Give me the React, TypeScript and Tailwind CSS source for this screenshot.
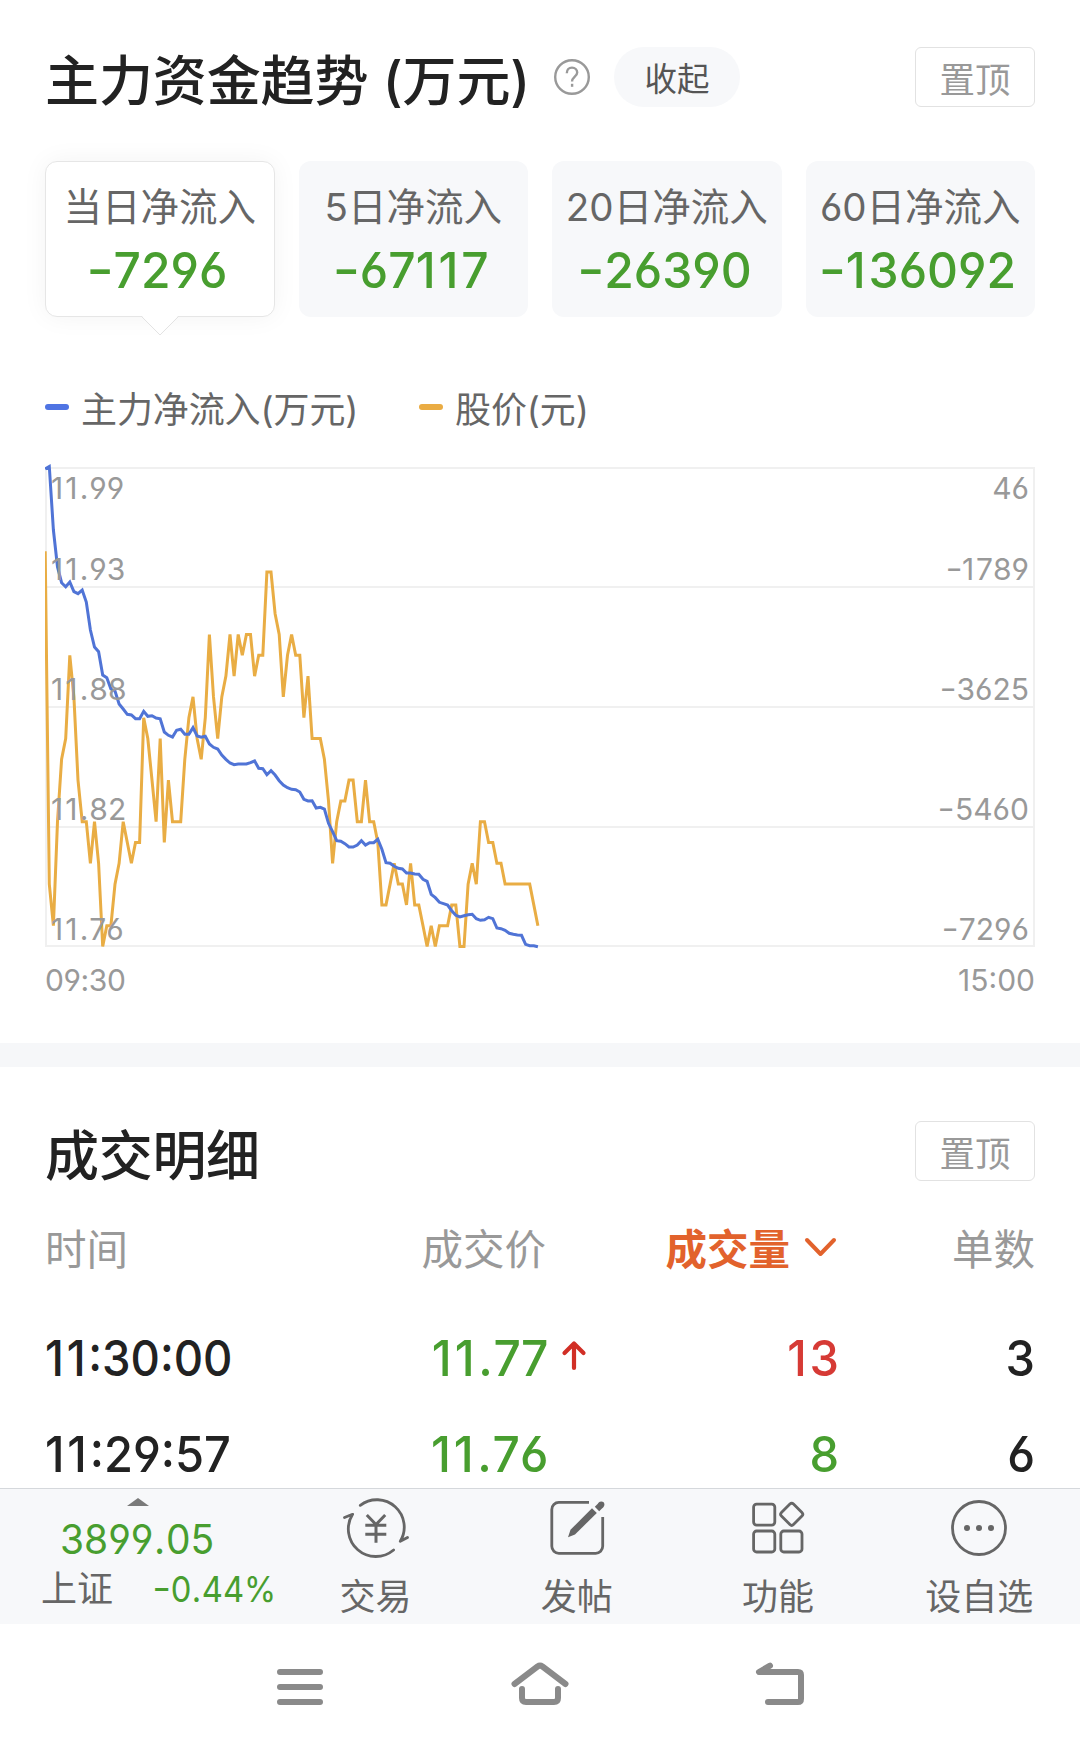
import React from "react";

const INFLOW_Y = [
  469, 466.5, 530, 567, 582.7, 586.7, 582, 591.7, 593.7, 590, 602, 630, 647, 651.7, 675, 677.7, 689, 691, 704, 709,
  714.3, 715, 718.7, 718.7, 711.3, 716.3, 715.7, 718, 718.7, 732, 735.3, 737, 730.3, 729.3, 734.3, 734.3, 727.7, 736,
  737.3, 736.3, 744, 747.3, 749, 755, 759.3, 763, 764.7, 764, 764, 764, 762.7, 761, 768.3, 768.7, 774.7, 770.7, 775,
  780.7, 785, 787.7, 789.3, 789.7, 792, 799.3, 801, 800.7, 808, 807.3, 809, 823.3, 831.7, 840.7, 841.3, 843.7, 847,
  847, 845, 840.7, 845, 842.7, 842.7, 839.3, 849.3, 862.7, 863.3, 866.3, 868.3, 869, 873, 873, 874, 874.3, 879.3,
  881.3, 894.3, 897.7, 902.3, 903.7, 905, 910.7, 915.3, 917, 915.7, 914.7, 914.3, 918.7, 920.3, 919.7, 917.3, 918.7,
  928, 928.7, 930.3, 933.3, 934.3, 935, 935.3, 944.3, 945.7, 945.7, 946.7,
];

// Price per minute, in cents above 11.76
const PRICE = [
  19, 3, 1, 6, 9, 10, 14, 12, 8, 6, 6, 4, 6, 4, 0, 1, 1, 3, 4, 6, 5, 4, 5, 5, 11, 10, 8, 6, 10, 5, 8, 6, 6, 6, 9, 11,
  12, 10, 9, 11, 15, 12, 10, 12, 13, 15, 13, 15, 14, 15, 15, 13, 14, 14, 18, 18, 16, 15, 12, 14, 15, 14, 14, 11, 13,
  10, 10, 10, 9, 7, 4, 6, 7, 7, 8, 8, 6, 6, 8, 6, 6, 5, 2, 2, 3, 4, 3, 3, 2, 4, 2, 2, 1, 0, 1, 0, 1, 1, 1, 2, 2, 0,
  0, 3, 4, 3, 6, 6, 5, 5, 4, 4, 3, 3, 3, 3, 3, 3, 3, 2, 1,
];

const px = (i: number) => (i * 4.106 + 0.2).toFixed(1);
const inflowPoints = INFLOW_Y.map((y, i) => `${px(i)},${y - 460}`).join(" ");
const pricePoints = PRICE.map((n, i) => `${px(i)},${(486.5 - n * 20.8).toFixed(1)}`).join(" ");

const CARDS = [
  { label: "当日净流入", value: "-7296", active: true },
  { label: "5日净流入", value: "-67117" },
  { label: "20日净流入", value: "-26390" },
  { label: "60日净流入", value: "-136092" },
];

const AXIS = [
  { left: "11.99", right: "46", top: "top-[13px]" },
  { left: "11.93", right: "-1789", top: "top-[94px]" },
  { left: "11.88", right: "-3625", top: "top-[214px]" },
  { left: "11.82", right: "-5460", top: "top-[334px]" },
  { left: "11.76", right: "-7296", top: "top-[454px]" },
];

// Figures with a wider minus, point and digit one than the font gives
function Num({ value }: { value: string }) {
  return (
    <>
      {value.split(/([-.1])/).map((part, i) => {
        if (part === "-") return <span key={i} className="-mr-[0.01em] inline-block origin-right -translate-y-[0.03em] scale-x-[1.25]">-</span>;
        if (part === ".") return <span key={i} className="mx-[0.015em]">.</span>;
        if (part === "1") return <span key={i} className="mr-[0.06em]">1</span>;
        return part;
      })}
    </>
  );
}

function PinButton() {
  return (
    <button className="flex h-[60px] w-[120px] items-center justify-center rounded-[6px] border border-[#e2e2e2] pt-[7px] text-[35.5px] leading-none text-[#999]">
      置顶
    </button>
  );
}

function Tab({ label, children }: { label: string; children: React.ReactNode }) {
  return (
    <div className="flex flex-1 flex-col items-center pt-[6px]">
      <svg width="68" height="66" viewBox="0 0 68 66" fill="none" stroke="#666" strokeWidth="2.8">
        {children}
      </svg>
      <span className="mt-[18px] text-[36px] leading-[36px] text-[#666]">{label}</span>
    </div>
  );
}

export default function App() {
  return (
    <div className="flex h-[1748px] w-[1080px] flex-col overflow-hidden bg-white font-['Inter','Noto_Sans_CJK_SC',sans-serif] text-[#222] [font-feature-settings:'cv03','cv04'] [font-kerning:none]">
      <section className="flex h-[1043px] flex-col px-[45px] pt-[47px]">
        <header className="flex h-[60px] items-center">
          <h1 className="w-[509px] pt-[9px] text-[54px] leading-none font-medium tracking-[-0.1px] whitespace-nowrap">主力资金趋势 (万元)</h1>
          <svg width="38" height="38" viewBox="0 0 38 38" fill="none" stroke="#999" strokeWidth="2.4">
            <circle cx="18" cy="19" r="16.8" />
            <path d="M12.800 15.200c0-3.400 2.200-5.600 5.200-5.600s5.200 2.100 5.200 5c0 4-5.100 4.300-5.100 8.900" />
            <path d="M18.100 25.800v3" />
          </svg>
          <button className="ml-[22px] h-[60px] w-[126px] rounded-full bg-[#f7f8fa] pt-[7px] text-[32.5px] leading-none text-[#555]">收起</button>
          <div className="ml-auto">
            <PinButton />
          </div>
        </header>

        <div className="mt-[54px] grid grid-cols-4 gap-[24px]">
          {CARDS.map((c) => (
            <div
              key={c.label}
              className={
                c.active
                  ? "relative flex h-[156px] flex-col items-center rounded-[12px] border border-[#e6e6e6] bg-white pt-[26px] shadow-[0_0_26px_rgba(0,0,0,0.05)]"
                  : "flex h-[156px] flex-col items-center rounded-[12px] bg-[#f7f8fa] pt-[27px]"
              }
            >
              <span className="text-[38.5px] leading-[38px] whitespace-nowrap text-[#666]">{c.label}</span>
              <span className="mt-[19px] scale-x-[0.96] text-[50px] leading-[50px] font-medium whitespace-nowrap text-[#489e2f]">
                <Num value={c.value} />
              </span>
              {c.active && (
                <svg className="absolute top-[153px] left-[94px]" width="40" height="22" viewBox="0 0 40 22">
                  <path d="M1 0 L20 20 L39 0Z" fill="#fff" />
                  <path d="M1.500 1.500 L20 20 L38.500 1.500" fill="none" stroke="#e3e3e3" />
                </svg>
              )}
            </div>
          ))}
        </div>

        <div className="mt-[71px] flex h-[38px] items-center text-[36px] leading-none text-[#666]">
          <i className="h-[6px] w-[24px] rounded-full bg-[#4f74e3]" />
          <span className="ml-[12px] w-[338px] pt-[6px] tracking-[-0.1px] whitespace-nowrap">主力净流入(万元)</span>
          <i className="h-[6px] w-[24px] rounded-full bg-[#eaac43]" />
          <span className="ml-[12px] pt-[6px] tracking-[-0.1px]">股价(元)</span>
        </div>

        <div className="relative mt-[34px] h-[494px]">
          <svg width="990" height="494" viewBox="0 0 990 494" fill="none" strokeWidth="3">
            <g stroke="#f0f0f0" strokeWidth="2">
              <path d="M0 8H990M0 127H990M0 247H990M0 367H990M0 486H990M1 8V486M989 8V486" />
            </g>
            <polyline points={pricePoints} stroke="#e9ad44" />
            <polyline points={inflowPoints} stroke="#5074d6" />
          </svg>
          {AXIS.map((a) => (
            <div key={a.left} className={`absolute inset-x-0 flex justify-between pr-[6px] pl-[6px] text-[30px] leading-[30px] text-[#999] ${a.top}`}>
              <span className="tracking-[0.2px]"><Num value={a.left} /></span>
              <span><Num value={a.right} /></span>
            </div>
          ))}
        </div>
        <div className="mt-[11px] flex justify-between text-[30px] leading-[30px] text-[#999]">
          <span className="tracking-[-0.4px]">09:30</span>
          <span>15:00</span>
        </div>
      </section>

      <div className="h-[24px] bg-[#f6f7f9]" />

      <section className="flex h-[421px] flex-col overflow-hidden px-[45px] pt-[54px]">
        <header className="flex h-[60px] items-center justify-between">
          <h2 className="pt-[11px] text-[54px] leading-none font-medium tracking-[-0.3px]">成交明细</h2>
          <PinButton />
        </header>
        <div className="mt-[48px] grid grid-cols-[501px_291px_198px] text-[41.500px] leading-[42px] text-[#999]">
          <div className="flex justify-between">
            <span>时间</span>
            <span>成交价</span>
          </div>
          <div className="flex items-center justify-end">
            <span className="font-bold text-[#e2622c]">成交量</span>
            <svg className="mb-[4px] ml-[14px]" width="33" height="22" viewBox="0 0 33 22" fill="none" stroke="#e2622c" strokeWidth="4" strokeLinecap="round" strokeLinejoin="round">
              <path d="M3 3 L16.500 17 L30 3" />
            </svg>
          </div>
          <span className="text-right">单数</span>
        </div>
        <div className="mt-[39px]">
          {[
            { t: "11:30:00", p: "11.77", up: true, v: "13", n: "3" },
            { t: "11:29:57", p: "11.76", up: false, v: "8", n: "6" },
          ].map((r) => (
            <div key={r.t} className="grid h-[96px] grid-cols-[501px_291px_198px] items-center text-[50px] leading-none font-medium">
              <div className="flex justify-between">
                <span className={`origin-left ${r.up ? "scale-x-[0.91]" : "scale-x-[0.94]"}`}><Num value={r.t} /></span>
                <span className="relative">
                  <span className="inline-block origin-right translate-x-[2px] scale-x-[0.96] text-[#489e2f]"><Num value={r.p} /></span>
                  {r.up && (
                    <svg className="absolute top-[7px] left-full ml-[15px]" width="26" height="32" viewBox="0 0 26 32" fill="none" stroke="#d12f26" strokeWidth="4.200" strokeLinecap="round" strokeLinejoin="round">
                      <path d="M13 28V4M3.500 13 L13 3.500 L22.500 13" />
                    </svg>
                  )}
                </span>
              </div>
              <span className={`origin-right translate-x-[2px] scale-x-[0.94] text-right ${r.up ? "text-[#d63a35]" : "text-[#489e2f]"}`}>
                <Num value={r.v} />
              </span>
              <span className="origin-right scale-x-[0.94] text-right">{r.n}</span>
            </div>
          ))}
        </div>
      </section>

      <nav className="flex h-[136px] border-t border-[#d5d8dc] bg-[#f7f8fa]">
        <div className="flex w-[275px] flex-col items-center pt-[9px]">
          <svg width="22" height="8" viewBox="0 0 22 8">
            <path d="M0 8 L11 0 L22 8Z" fill="#7a7a7a" />
          </svg>
          <span className="mt-[13px] scale-x-[0.95] text-[41px] leading-[41px] text-[#489e2f]">
            <Num value="3899.05" />
          </span>
          <div className="mt-[11px] flex w-full justify-between pl-[41px] text-[36px] leading-[36px]">
            <span className="text-[#666]">上证</span>
            <span className="origin-right translate-x-px scale-x-[0.91] text-[#489e2f]">
              <Num value="-0.44%" />
            </span>
          </div>
        </div>
        <div className="flex flex-1">
          <Tab label="交易">
            <path d="M18.300 10.300A27.400 27.400 0 0 1 58.300 46.300L65.500 42.500" strokeLinecap="round" strokeLinejoin="round" />
            <path d="M51.600 55A27.500 27.500 0 0 1 10.600 19.300L2.500 22.500" strokeLinecap="round" strokeLinejoin="round" />
            <path d="M24.800 20 L34 29.500 L43.200 20M23.300 30.300H44.300M23.300 39.300H44.300M34 29V47.700" strokeWidth="3" />
          </Tab>
          <Tab label="发帖">
            <path d="M46 7.400H15.800A7 7 0 0 0 8.800 14.400V51.300A7 7 0 0 0 15.800 58.300H52.700A7 7 0 0 0 59.700 51.300V22" />
            <path d="M25 42.200 L27.500 34.800 L49 13.300 L53.800 18 L32 39.500Z" fill="#666" stroke="none" />
            <path d="M54 14 L58.300 9.700" strokeWidth="6.200" />
            <circle cx="58.300" cy="9.500" r="3.100" fill="#666" stroke="none" />
          </Tab>
          <Tab label="功能">
            <rect x="9.600" y="9.100" width="21.200" height="21" rx="3" />
            <rect x="9.600" y="36" width="21.200" height="21" rx="3" />
            <rect x="36.800" y="36" width="21.200" height="21" rx="3" />
            <rect x="39.200" y="10.800" width="17" height="17" rx="2.500" transform="rotate(45 47.700 19.300)" />
          </Tab>
          <Tab label="设自选">
            <circle cx="34" cy="33" r="26.500" />
            <g fill="#666" stroke="none">
              <circle cx="22" cy="33" r="3" />
              <circle cx="34" cy="33" r="3" />
              <circle cx="46" cy="33" r="3" />
            </g>
          </Tab>
        </div>
      </nav>

      <footer className="flex h-[124px] items-start justify-between px-[270px] pt-[32px]">
        <svg width="60" height="60" viewBox="0 0 60 60" stroke="#8a8a8a" strokeWidth="6" strokeLinecap="round">
          <path d="M10 16H50M10 31H50M10 46H50" />
        </svg>
        <svg width="60" height="60" viewBox="0 0 60 60" fill="none" stroke="#8a8a8a" strokeWidth="6" strokeLinecap="round">
          <path d="M4.500 28 L27.500 10.500 Q30 8.800 32.500 10.500 L55.500 28" />
          <path d="M12 33V42Q12 46 16 46H44Q48 46 48 42V33" />
        </svg>
        <svg width="60" height="60" viewBox="0 0 60 60" fill="none" stroke="#8a8a8a" strokeWidth="6" strokeLinecap="round" strokeLinejoin="round">
          <path d="M20 9.700 L9 16H48Q51 16 51 19V43Q51 46 48 46H18" />
        </svg>
      </footer>
    </div>
  );
}
